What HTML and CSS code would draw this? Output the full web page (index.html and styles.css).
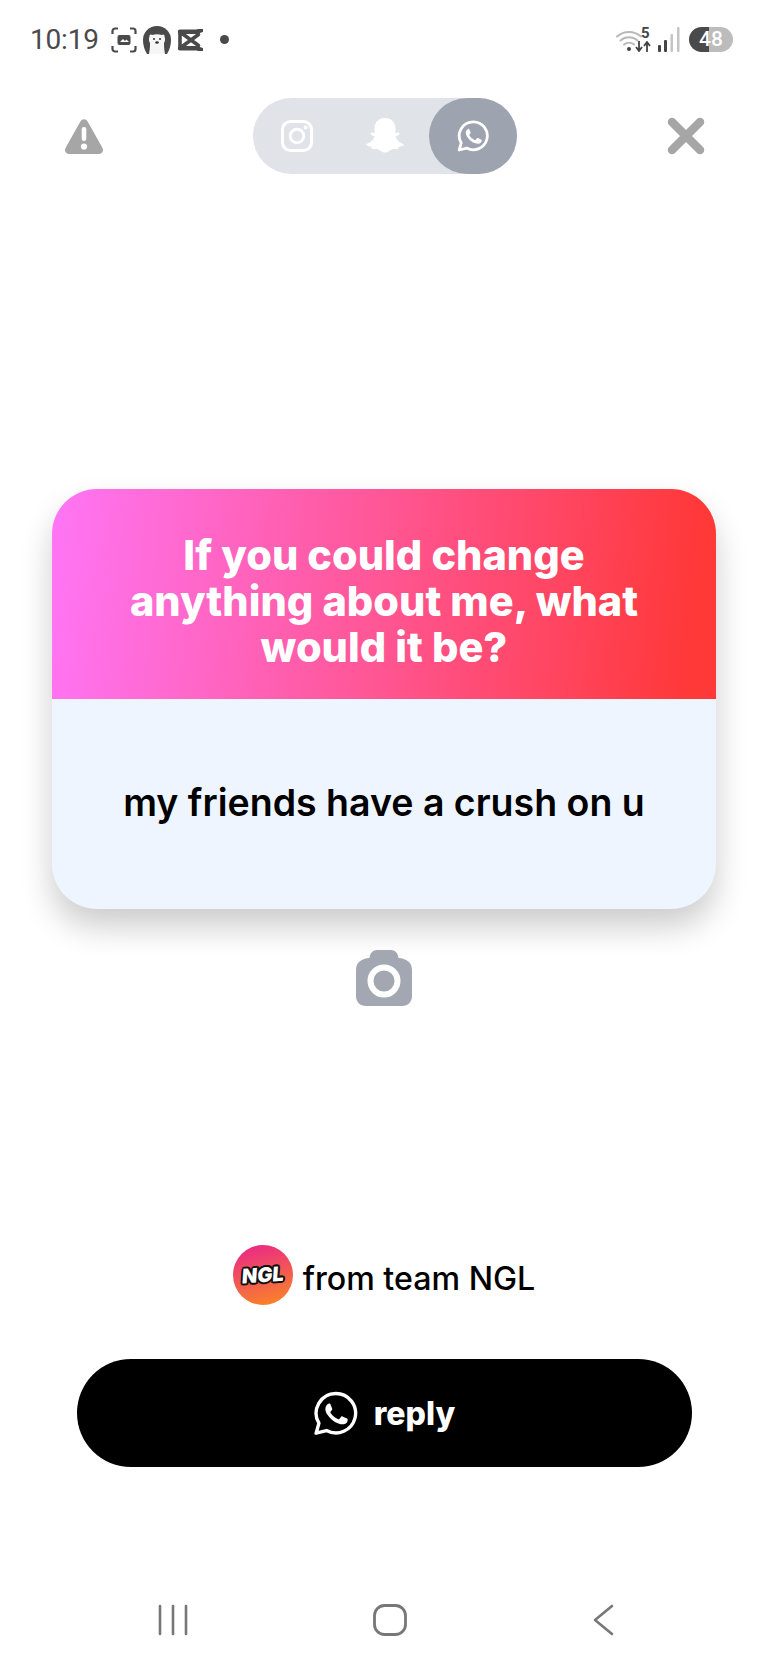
FILE: index.html
```html
<!DOCTYPE html>
<html lang="en">
<head>
<meta charset="utf-8">
<title>NGL</title>
<link rel="stylesheet" href="styles.css">
</head>
<body>
<div class="screen">
  <header class="status">
    <div class="status-left">
      <span class="clock">10:19</span>
      <svg class="ico-shot" viewBox="0 0 26 26"><path d="M1.500 7V4a2.500 2.500 0 0 1 2.500-2.500h3M19 1.500h3A2.500 2.500 0 0 1 24.500 4v3M24.500 19v3a2.500 2.500 0 0 1-2.500 2.500h-3M7 24.500H4A2.500 2.500 0 0 1 1.500 22v-3" fill="none" stroke="#4a4a4a" stroke-width="2.200"/><rect x="6.500" y="8" width="13" height="10" rx="2" fill="#4a4a4a"/><path d="M9 15l3-3 2 2 1.500-1.500L18 15z" fill="#fff"/></svg>
      <svg class="ico-bear" viewBox="0 0 28 28"><path d="M14 0a14 14 0 0 1 14 14c0 5-1.500 10-4 14H4C1.500 24 0 19 0 14A14 14 0 0 1 14 0z" fill="#4a4a4a"/><path d="M6.500 10.500c-.5-1.800 1.500-2.800 2.600-1.600 3.300-1 6.500-1 9.800 0 1.100-1.200 3.100-.2 2.600 1.600 .8 2.200.8 4.500-.5 6.500-.2 4 .5 8 1 11H6c.5-3 1.200-7 1-11-1.300-2-1.300-4.300-.5-6.500z" fill="#f6f6f6"/><circle cx="11" cy="13" r="1" fill="#333"/><circle cx="17" cy="13" r="1" fill="#333"/><ellipse cx="14" cy="16.500" rx="1.800" ry="1.200" fill="#333"/></svg>
      <svg class="ico-cut" viewBox="0 0 26 22"><path d="M3 2.800h16.500L25 1M3 19.200h16.500L25 21" fill="none" stroke="#4a4a4a" stroke-width="4.400" stroke-linecap="round" stroke-linejoin="round"/><path d="M3 3l18.500 13.500M3 19L21.500 5.500M3 3v16" fill="none" stroke="#4a4a4a" stroke-width="3.600" stroke-linecap="round"/></svg>
      <span class="dot"></span>
    </div>
    <div class="status-right">
      <div class="wifi">
        <svg class="ico-wifi" viewBox="0 0 28 24"><path d="M1 8.500a18 18 0 0 1 24 0M4.500 12.500a13 13 0 0 1 17 0M8 16.500a8 8 0 0 1 10 0" fill="none" stroke="#b9b9b9" stroke-width="2" stroke-linecap="round"/><circle cx="13" cy="21" r="2" fill="#444"/></svg>
        <span class="wifi-gen">5</span>
        <svg class="ico-arrows" viewBox="0 0 16 11"><path d="M4 0v9M1 6l3 4 3-4M12 11V2M9 5l3-4 3 4" fill="none" stroke="#444" stroke-width="1.800"/></svg>
      </div>
      <svg class="ico-signal" viewBox="0 0 22 25"><rect x="0" y="18" width="3" height="7" rx="1" fill="#444"/><rect x="6" y="13" width="3" height="12" rx="1" fill="#444"/><rect x="12.500" y="7" width="2.500" height="18" rx="1" fill="#c4c4c4"/><rect x="19" y="0" width="2.500" height="25" rx="1" fill="#c4c4c4"/></svg>
      <span class="battery">48</span>
    </div>
  </header>

  <nav class="topbar">
    <svg class="ico-warn" viewBox="0 0 40 37"><path d="M16.500 3.200a4 4 0 0 1 7 0l15 26.800a4 4 0 0 1-3.500 6H5a4 4 0 0 1-3.500-6z" fill="#a6a6a6"/><rect x="17.700" y="9" width="4.600" height="14" rx="2.300" fill="#fff"/><circle cx="20" cy="28.500" r="3.100" fill="#fff"/></svg>
    <div class="share-pill">
      <span class="share-item">
        <svg class="ico-share" viewBox="0 0 32 32"><rect x="1.500" y="1.500" width="29" height="29" rx="8" fill="none" stroke="#fff" stroke-width="3"/><circle cx="16" cy="16" r="6.800" fill="none" stroke="#fff" stroke-width="3"/><circle cx="24.600" cy="7.400" r="2" fill="#fff"/></svg>
      </span>
      <span class="share-item">
        <svg class="ico-snap" viewBox="0 0 40 38"><path d="M20 1c6.500 0 10.500 4.500 10.500 10.500 0 1.500-.1 3-.2 4.200 1.500.4 2.800-.8 3.800.1 1 1-.2 2.500-2.700 3.300-.7.200-.9.700-.6 1.400 1.200 2.800 3.700 5.300 7.200 6.200.9.200 1 1 .4 1.500-1 .9-3 1.300-4.700 1.600-.5 1.200-.2 2.500-1.300 2.500-1.400 0-3.500-.6-5.500.1-2.200.8-3.500 3.100-6.900 3.100s-4.700-2.300-6.900-3.100c-2-.7-4.100-.1-5.500-.1-1.100 0-.8-1.300-1.300-2.500-1.700-.3-3.700-.7-4.700-1.600-.6-.5-.5-1.300.4-1.500 3.500-.9 6-3.400 7.200-6.200.3-.7.100-1.200-.6-1.400-2.500-.8-3.700-2.300-2.700-3.300 1-.9 2.300.3 3.800-.1-.1-1.200-.2-2.700-.2-4.200C9.500 5.500 13.500 1 20 1z" fill="#fff"/></svg>
      </span>
      <span class="share-item share-item-on">
        <svg class="ico-share" viewBox="0 0 32 32"><path d="M16.300 1.800A14 14 0 0 0 4.200 22.900L2.200 30l7.400-1.900A14 14 0 1 0 16.300 1.800z" fill="none" stroke="#fff" stroke-width="2.800" stroke-linejoin="round"/><path d="M11.800 8.800c-.4 0-1 .2-1.500.7-.6.700-1.500 1.600-1.500 3.400s1.400 3.800 1.600 4c.2.300 2.700 4.300 6.700 5.800 3.300 1.300 4 1 4.700 1 .8-.1 2.300-1 2.600-1.900.3-.9.300-1.700.2-1.900-.1-.2-.4-.3-.8-.5l-2.800-1.300c-.4-.2-.7-.2-1 .2l-1.300 1.600c-.2.300-.5.300-.9.100-.4-.2-1.700-.6-3.200-2-1.200-1-2-2.300-2.200-2.700-.2-.4 0-.6.200-.8l.6-.7c.2-.2.300-.4.400-.7.100-.3.100-.5 0-.7l-1.200-3c-.3-.7-.7-.7-1-.7z" fill="#fff"/></svg>
      </span>
    </div>
    <svg class="ico-close" viewBox="0 0 38 38"><path d="M5 5l28 28M33 5L5 33" stroke="#a6a6a6" stroke-width="8.500" stroke-linecap="round"/></svg>
  </nav>

  <section class="card">
    <h1 class="card-question">If you could change anything about me, what would it be?</h1>
    <p class="card-answer">my friends have a crush on u</p>
  </section>

  <svg class="ico-camera" viewBox="0 0 56 56"><path d="M13.500 8C14 3 17 0 21 0h14c4 0 7 3 7.500 8C50 8.500 56 12 56 20v26c0 6-4 10-10 10H10C4 56 0 52 0 46V20C0 12 6 8.500 13.500 8z" fill="#a2a7b1"/><circle cx="28" cy="31" r="13.500" fill="#a2a7b1" stroke="#fff" stroke-width="6"/></svg>

  <div class="sender">
    <span class="sender-logo"><span class="sender-logo-text">NGL</span></span>
    <span class="sender-name">from team NGL</span>
  </div>

  <button class="reply" type="button">
    <svg class="ico-reply" viewBox="0 0 32 32"><path d="M16.300 1.800A14 14 0 0 0 4.200 22.900L2.200 30l7.400-1.900A14 14 0 1 0 16.300 1.800z" fill="none" stroke="#fff" stroke-width="2.400" stroke-linejoin="round"/><path d="M11.800 8.800c-.4 0-1 .2-1.500.7-.6.700-1.500 1.600-1.500 3.400s1.400 3.800 1.600 4c.2.300 2.700 4.300 6.700 5.800 3.300 1.300 4 1 4.700 1 .8-.1 2.300-1 2.600-1.900.3-.9.300-1.700.2-1.900-.1-.2-.4-.3-.8-.5l-2.800-1.300c-.4-.2-.7-.2-1 .2l-1.300 1.600c-.2.300-.5.300-.9.100-.4-.2-1.700-.6-3.200-2-1.200-1-2-2.300-2.200-2.700-.2-.4 0-.6.200-.8l.6-.7c.2-.2.300-.4.400-.7.100-.3.100-.5 0-.7l-1.200-3c-.3-.7-.7-.7-1-.7z" fill="#fff"/></svg>
    <span>reply</span>
  </button>

  <footer class="navbar">
    <svg class="ico-recent" viewBox="0 0 30 32"><path d="M2 2v28M15 2v28M28 2v28" stroke="#777" stroke-width="2.600" stroke-linecap="round"/></svg>
    <svg class="ico-home" viewBox="0 0 34 32"><rect x="1.500" y="1.500" width="31" height="29" rx="10" fill="none" stroke="#777" stroke-width="2.800"/></svg>
    <svg class="ico-back" viewBox="0 0 22 32"><path d="M20 2L3 16l17 14" fill="none" stroke="#777" stroke-width="2.600" stroke-linecap="round" stroke-linejoin="round"/></svg>
  </footer>
</div>
</body>
</html>
```

FILE: styles.css
```css
* { box-sizing: border-box; }

html, body {
  margin: 0;
  padding: 0;
  background: #fff;
}

.screen {
  width: 768px;
  height: 1664px;
  overflow: hidden;
  display: flex;
  flex-direction: column;
  align-items: center;
  font-family: Inter, "Noto Sans", sans-serif;
  color: #000;
}

/* Status bar */
.status {
  width: 100%;
  height: 78px;
  padding: 26px 35px 0 30px;
  display: flex;
  justify-content: space-between;
  align-items: flex-start;
}

.status-left {
  display: flex;
  align-items: center;
  height: 27px;
}

.clock {
  font-family: Roboto, sans-serif;
  font-size: 28px;
  letter-spacing: -0.2px;
  color: #4a4a4a;
  line-height: 27px;
  width: 81px;
}

.ico-shot { width: 26px; height: 26px; }
.ico-bear { width: 28px; height: 28px; margin-left: 6px; }
.ico-cut { width: 26px; height: 22px; margin-left: 6px; }

.dot {
  width: 9px;
  height: 9px;
  border-radius: 50%;
  background: #4a4a4a;
  margin-left: 17px;
}

.status-right {
  display: flex;
  align-items: center;
  height: 27px;
}

.wifi {
  position: relative;
  width: 35px;
  height: 26px;
}

.ico-wifi {
  position: absolute;
  left: 0;
  top: 1px;
  width: 28px;
  height: 24px;
}

.wifi-gen {
  position: absolute;
  left: 25px;
  top: -1px;
  font-family: Roboto, sans-serif;
  font-size: 15px;
  font-weight: 700;
  line-height: 15px;
  color: #444;
}

.ico-arrows {
  position: absolute;
  left: 19px;
  top: 14px;
  width: 16px;
  height: 11px;
}

.ico-signal { width: 22px; height: 25px; margin-left: 7px; }

.battery {
  width: 44px;
  height: 25px;
  margin-left: 9px;
  border-radius: 13px;
  background: linear-gradient(90deg, #4a4a4a 46%, #bcbcbc 46%);
  color: #fff;
  font-family: Roboto, sans-serif;
  font-size: 21px;
  font-weight: 500;
  line-height: 25px;
  text-align: center;
}

/* Top controls */
.topbar {
  width: 100%;
  height: 76px;
  margin-top: 20px;
  padding: 0 63px 0 64px;
  display: flex;
  justify-content: space-between;
  align-items: center;
}

.ico-warn { width: 40px; height: 37px; }
.ico-close { width: 38px; height: 38px; }

.share-pill {
  width: 264px;
  height: 76px;
  margin-right: 2px;
  border-radius: 38px;
  background: #e0e3e8;
  display: flex;
}

.share-item {
  flex: 1;
  display: flex;
  align-items: center;
  justify-content: center;
  border-radius: 38px;
}

.share-item-on { background: #9ea4af; }

.ico-share { width: 32px; height: 32px; }
.ico-snap { width: 40px; height: 38px; }

/* Question card */
.card {
  width: 664px;
  margin-top: 315px;
  border-radius: 45px;
  overflow: hidden;
  background: #eef5ff;
  box-shadow: 0 18px 32px rgba(0, 0, 0, 0.2);
}

.card-question {
  margin: 0;
  height: 210px;
  padding: 13px 60px 0;
  display: flex;
  align-items: center;
  justify-content: center;
  text-align: center;
  font-size: 41.5px;
  font-weight: 800;
  line-height: 46px;
  color: #fff;
  background: linear-gradient(95deg, #ff74f2 2%, #ff3838 96%);
}

.card-answer {
  margin: 0;
  height: 210px;
  padding-bottom: 3px;
  display: flex;
  align-items: center;
  justify-content: center;
  font-size: 37.5px;
  font-weight: 600;
  color: #000;
}

.ico-camera {
  width: 56px;
  height: 56px;
  margin-top: 41px;
}

/* Sender line */
.sender {
  margin-top: 239px;
  display: flex;
  align-items: center;
  gap: 10px;
}

.sender-logo {
  width: 60px;
  height: 60px;
  border-radius: 50%;
  background: linear-gradient(165deg, #e9238c, #fb8a20);
  display: flex;
  align-items: center;
  justify-content: center;
}

.sender-logo-text {
  font-size: 20px;
  font-weight: 900;
  color: #fff;
  transform: rotate(-4deg) skewX(-8deg);
  text-shadow: 2px 0 0 #111, -2px 0 0 #111, 0 2px 0 #111, 0 -2px 0 #111, 1.5px 1.5px 0 #111, -1.5px -1.5px 0 #111, 1.5px -1.5px 0 #111, -1.5px 1.5px 0 #111;
}

.sender-name {
  padding-top: 6px;
  font-size: 32.2px;
  font-weight: 500;
  color: #000;
}

/* Reply button */
.reply {
  width: 615px;
  height: 108px;
  margin-top: 54px;
  border: 0;
  border-radius: 54px;
  background: #000;
  color: #fff;
  display: flex;
  align-items: center;
  justify-content: center;
  gap: 16px;
  font-family: inherit;
  font-size: 32px;
  font-weight: 800;
}

.ico-reply { width: 45px; height: 45px; }

/* Android navigation */
.navbar {
  width: 100%;
  margin-top: 137px;
  height: 32px;
  display: flex;
  align-items: center;
  padding: 0 154px 0 158px;
  justify-content: space-between;
}

.ico-recent { width: 30px; height: 32px; }
.ico-home { width: 34px; height: 32px; }
.ico-back { width: 22px; height: 32px; }
```
